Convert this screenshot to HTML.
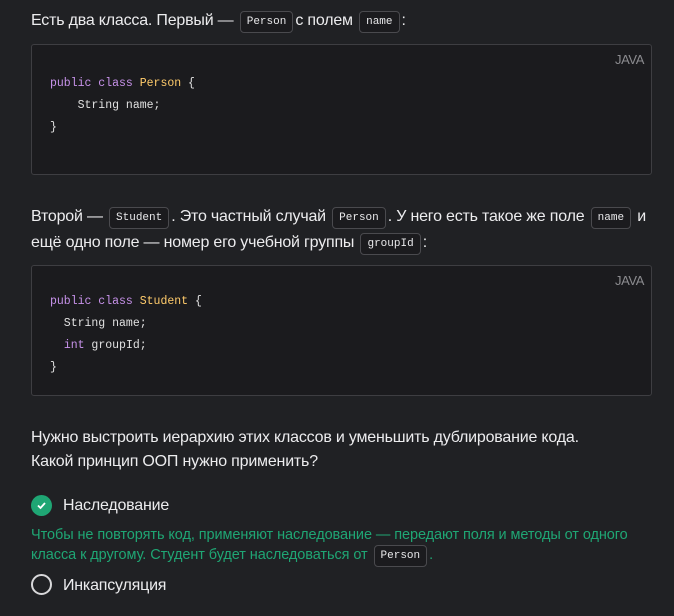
<!DOCTYPE html>
<html><head><meta charset="utf-8"><style>
body{margin:0;width:674px;height:616px;background:#202124;overflow:hidden;font-family:"Liberation Sans",sans-serif;color:#ececee;}
.l{position:absolute;left:31px;font-size:16px;letter-spacing:-0.2px;white-space:nowrap;line-height:22px;}
code{font-family:"Liberation Mono",monospace;font-size:11px;letter-spacing:0;display:inline-block;background:#1b1b1e;border:1px solid #4a4a4e;border-radius:4px;padding:0 6px;line-height:20px;vertical-align:1px;margin:0 2px;color:#e8e8ea}
.cb{position:absolute;left:31px;width:619px;background:#1b1b1e;border:1px solid #3e3e42;border-radius:3px;}
.j{position:absolute;right:7px;top:7px;font-size:13px;color:#8b8b8f;letter-spacing:-0.4px}
pre{margin:0;position:absolute;left:18px;top:28px;font-family:"Liberation Mono",monospace;font-size:11.5px;line-height:22px;color:#e0e0e0}
.k{color:#c792ea}.c{color:#ffcb6b}
.g{color:#1fa674}
</style></head><body>
<div class="l" style="top:10px">Есть два класса. Первый — <code>Person</code>с полем <code>name</code>:</div>
<div class="cb" style="top:44px;height:129px"><span class="j">JAVA</span>
<pre><span class="k">public class</span> <span class="c">Person</span> {
    String name;
}</pre></div>
<div class="l" style="top:206px">Второй — <code>Student</code>. Это частный случай <code>Person</code>. У него есть такое же поле <code>name</code> и</div>
<div class="l" style="top:232px">ещё одно поле — номер его учебной группы <code>groupId</code>:</div>
<div class="cb" style="top:265px;height:129px"><span class="j">JAVA</span>
<pre style="top:25px"><span class="k">public class</span> <span class="c">Student</span> {
  String name;
  <span class="k">int</span> groupId;
}</pre></div>
<div class="l" style="top:427px">Нужно выстроить иерархию этих классов и уменьшить дублирование кода.</div>
<div class="l" style="top:451px">Какой принцип ООП нужно применить?</div>
<div style="position:absolute;left:31px;top:495px;width:21px;height:21px;border-radius:50%;background:#1fa674"><svg width="21" height="21"><path d="M7 10.5l2.5 2.5 4.5-5" stroke="#fff" stroke-width="1.8" fill="none"/></svg></div>
<div class="l" style="top:495px;left:63px">Наследование</div>
<div class="l g" style="top:524px;font-size:14.5px;letter-spacing:-0.08px">Чтобы не повторять код, применяют наследование — передают поля и методы от одного</div>
<div class="l g" style="top:544px;font-size:14.5px;letter-spacing:-0.08px">класса к другому. Студент будет наследоваться от <code>Person</code>.</div>
<div style="position:absolute;left:31px;top:574px;width:17px;height:17px;border-radius:50%;border:2px solid #d8d8da"></div>
<div class="l" style="top:575px;left:63px">Инкапсуляция</div>
</body></html>
